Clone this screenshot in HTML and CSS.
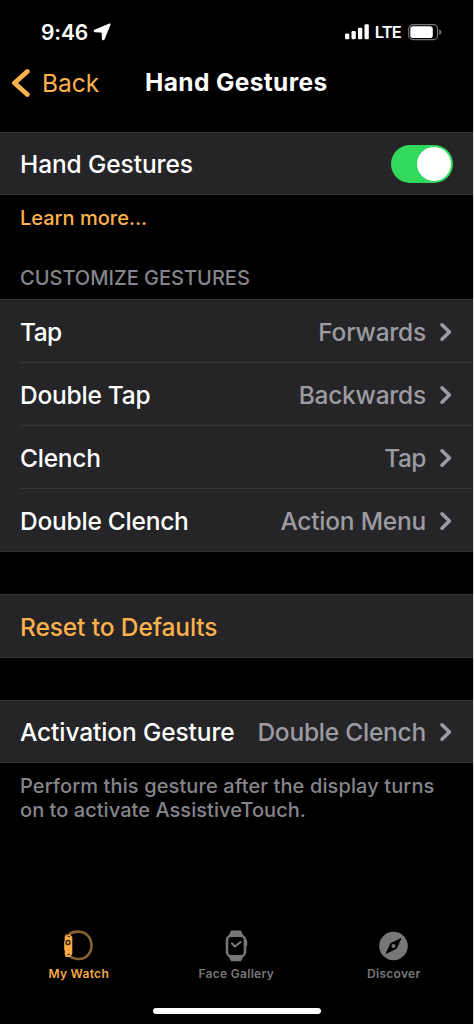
FILE: index.html
```html
<!DOCTYPE html>
<html lang="en">
<head>
<meta charset="utf-8">
<title>Hand Gestures</title>
<link rel="stylesheet" href="styles.css">
</head>
<body>
<svg class="defs" width="0" height="0" aria-hidden="true">
  <symbol id="chevron" viewBox="0 0 14 20"><path d="M3 2.800 10.400 10 3 17.200" fill="none" stroke="currentColor" stroke-width="3.600" stroke-linecap="round" stroke-linejoin="round"/></symbol>
</svg>
<div class="screen">
  <header class="status">
    <div class="clock"><span class="time">9:46</span>
      <svg class="location" width="18" height="18" viewBox="0 0 18 18"><path d="M16.300.6C17.200.200 17.900.9 17.500 1.800L11.600 16.300C11.100 17.600 8.900 17.300 8.900 15.900L8.700 10.200Q8.700 9.400 7.900 9.400L2 9.200C.5 9.200.2 7.300 1.500 6.800Z" fill="#fff"/></svg>
    </div>
    <div class="indicators">
      <svg width="25" height="16" viewBox="0 0 25 16" fill="#fff"><rect x="0" y="9.500" width="4.300" height="5.800" rx="1.300"/><rect x="6.500" y="7" width="4.300" height="8.300" rx="1.300"/><rect x="13" y="3.700" width="4.300" height="11.600" rx="1.300"/><rect x="19.500" y=".3" width="4.300" height="15" rx="1.300"/></svg>
      <span class="network">LTE</span>
      <svg class="battery" width="34" height="17" viewBox="0 0 34 17"><rect x=".7" y=".7" width="29" height="15" rx="4.500" fill="none" stroke="#777" stroke-width="1.200"/><rect x="2.300" y="2.300" width="22.500" height="11.800" rx="2.800" fill="#fff"/><path d="M31.300 5.600Q33.300 6.400 33.300 8.200T31.300 10.800Z" fill="#777"/></svg>
    </div>
  </header>
  <nav class="navbar">
    <a class="back"><svg width="20" height="32" viewBox="0 0 20 32"><path d="M17.300 4.500 4.500 16 17.300 27.500" fill="none" stroke="currentColor" stroke-width="4.800" stroke-linecap="round" stroke-linejoin="round"/></svg><span class="back-label">Back</span></a>
    <h1 class="title">Hand Gestures</h1>
  </nav>
  <main class="content">
    <section class="group switch">
      <div class="row"><span class="t-hand">Hand Gestures</span><span class="toggle"><span class="knob"></span></span></div>
    </section>
    <a class="learn">Learn more...</a>
    <h2 class="heading">CUSTOMIZE GESTURES</h2>
    <section class="group gestures">
      <div class="row"><span class="tight">Tap</span><span class="value"><span>Forwards</span><svg class="chevron"><use href="#chevron"/></svg></span></div>
      <div class="row"><span>Double Tap</span><span class="value"><span>Backwards</span><svg class="chevron"><use href="#chevron"/></svg></span></div>
      <div class="row"><span>Clench</span><span class="value"><span class="tight">Tap</span><svg class="chevron"><use href="#chevron"/></svg></span></div>
      <div class="row"><span>Double Clench</span><span class="value"><span>Action Menu</span><svg class="chevron"><use href="#chevron"/></svg></span></div>
    </section>
    <section class="group reset">
      <div class="row"><span class="loose">Reset to Defaults</span></div>
    </section>
    <section class="group activation">
      <div class="row"><span class="loose">Activation Gesture</span><span class="value"><span>Double Clench</span><svg class="chevron"><use href="#chevron"/></svg></span></div>
    </section>
    <p class="note"><span class="note-1">Perform this gesture after the display turns</span><br><span class="note-2">on to activate AssistiveTouch.</span></p>
  </main>
  <footer class="tabs">
    <a class="tab active">
      <svg width="32" height="32" viewBox="0 0 32 32"><path d="M6 4.500C9 1.700 13 1.300 17 1.800C24 2.500 28.500 8.500 28.500 15.500C28.500 23 23 29 16 29C12 29 9 28 6 25.500" fill="none" stroke="#86602f" stroke-width="2.600"/><path d="M2.500 4.500H7L9.300 7V24L7 27H2.500L1.700 24V20H1.200V11H1.700V7Z" fill="#f7aa45"/><circle cx="5" cy="12.500" r="2" fill="#f7aa45" stroke="#302010" stroke-width="1.300"/><path d="M4 25.500Q5 23.500 7 24.500M4 5.500Q5 7.500 7 6.500" fill="none" stroke="#302010"/></svg>
      <span>My Watch</span>
    </a>
    <a class="tab">
      <svg width="32" height="32" viewBox="0 0 32 32"><path d="M11 .6H21L23.500 6H8.500ZM8.500 26H23.500L21 31.200H11Z" fill="#77777a"/><rect x="7" y="5.600" width="18" height="20.800" rx="4.500" fill="#000" stroke="#77777a" stroke-width="2.600"/><path d="M26 11V15" stroke="#77777a" stroke-width="2.400" stroke-linecap="round"/><path d="M12 13.500 15 16.500 20.500 12" fill="none" stroke="#77777a" stroke-width="2.200" stroke-linecap="round" stroke-linejoin="round"/></svg>
      <span>Face Gallery</span>
    </a>
    <a class="tab">
      <svg width="32" height="32" viewBox="0 0 32 32"><circle cx="15.500" cy="16" r="14.300" fill="#77777a"/><path d="M22.800 8.700 18.200 18.500 8.200 23.300 12.800 13.500Z" fill="#000" stroke="#000" stroke-linejoin="round"/><circle cx="15.500" cy="16" r="2" fill="#77777a"/></svg>
      <span>Discover</span>
    </a>
  </footer>
  <div class="home"></div>
</div>
</body>
</html>
```
FILE: styles.css
```css
* { box-sizing: border-box; }
body { margin: 0; background: #000; font-family: Inter, Roboto, sans-serif; }
.defs { display: block; }
.screen { width: 474px; height: 1024px; display: flex; flex-direction: column; background: #000; border-right: 1px solid #ddd; color: #fff; white-space: nowrap; overflow: hidden; }
.status { height: 60px; padding: 20px 31px 0 41px; display: flex; justify-content: space-between; }
.clock, .indicators { height: 24px; display: flex; align-items: center; }
.time { font-size: 21px; font-weight: 600; letter-spacing: -0.1px; }
.location { margin-left: 5px; }
.network { font-size: 16.5px; font-weight: 600; letter-spacing: -0.8px; margin: 0 7px 0 5px; }
.navbar { height: 72px; padding: 6px 0 0 10px; display: flex; align-items: flex-start; }
.back { height: 34px; width: 135px; display: flex; align-items: center; color: #feb14c; }
.back-label { font-size: 24.5px; line-height: 30px; font-weight: 400; margin: -1px 0 0 12px; }
.title { margin: 0; height: 34px; line-height: 32px; font-size: 24.5px; font-weight: 700; letter-spacing: 0.38px; }
.content { flex: 1; }
.group { background: #252527; border-top: 1px solid #333335; border-bottom: 1px solid #333335; padding-left: 20px; }
.row { height: 61px; padding: 3px 20px 0 0; display: flex; align-items: center; justify-content: space-between; font-size: 24.5px; font-weight: 500; letter-spacing: -0.23px; }
.tight { letter-spacing: -0.5px; }
.loose { letter-spacing: -0.11px; }
.t-hand { margin-top: -2px; letter-spacing: -0.1px; }
.toggle { width: 62px; height: 38px; border-radius: 19px; background: #32d95d; padding: 2px; display: flex; justify-content: flex-end; margin: -3px 0 0; }
.knob { width: 34px; height: 34px; border-radius: 50%; background: #fff; }
.learn { display: block; padding: 10px 20px 0; line-height: 26px; height: 35px; font-size: 20px; font-weight: 500; color: #feb14c; }
.heading { margin: 35px 0 0; padding-left: 20px; height: 34px; line-height: 26px; font-size: 20px; font-weight: 500; color: #85858a; }
.gestures .row { height: 63px; padding-top: 1px; border-bottom: 1px solid #363638; }
.gestures .row:last-child { height: 62px; border: 0; }
.value { display: flex; align-items: center; color: #9c9ba2; }
.chevron { width: 14px; height: 20px; margin: 0 0 0 13px; }
.reset { margin-top: 42px; color: #feb14c; }
.reset .row { height: 62px; padding-top: 2px; }
.activation { margin-top: 42px; }
.activation .row { padding-top: 1px; }
.note { margin: 11px 0 0 20px; font-size: 20px; font-weight: 500; line-height: 24px; color: #85858a; }
.note-1 { letter-spacing: 0.11px; }
.note-2 { letter-spacing: 0.05px; }
.tabs { display: grid; grid-template-columns: repeat(3, 157.5px); height: 78px; }
.tab { display: flex; flex-direction: column; align-items: center; font-size: 12px; font-weight: 600; letter-spacing: 0.3px; color: #77777a; }
.tab span { margin-top: 4px; line-height: 16px; }
.active { color: #f7aa45; }
.home { width: 168px; height: 6px; margin: 0 auto 10px 153px; border-radius: 3px; background: #fff; flex: none; }
```
